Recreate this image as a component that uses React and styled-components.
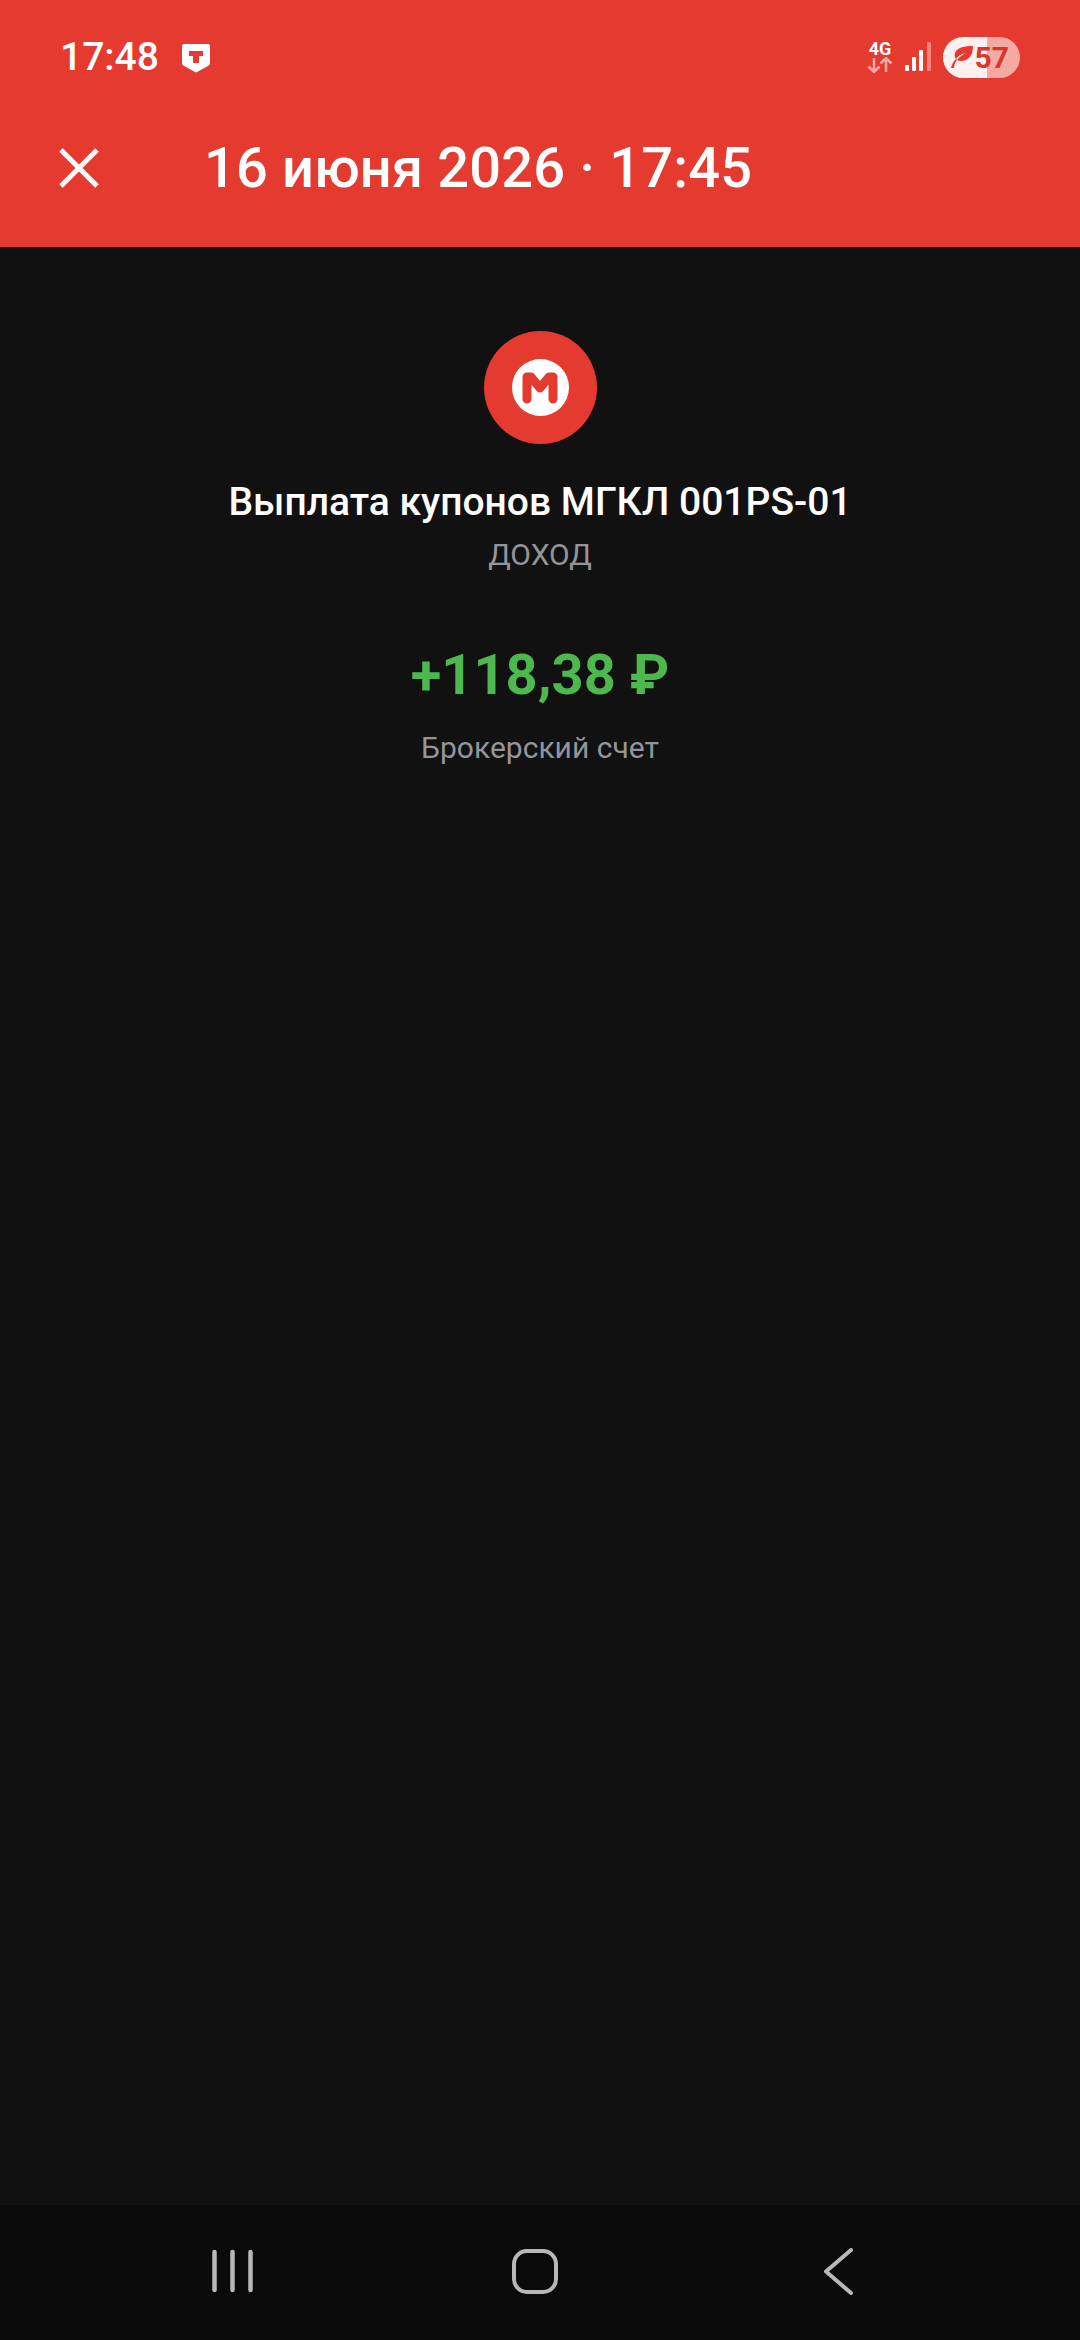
import React from 'react';
import styled, { createGlobalStyle } from 'styled-components';

const GlobalStyle = createGlobalStyle`
    html, body {
        margin: 0;
        padding: 0;
        background: #111111;
    }
`;

const App = () => {
    return (
        <Screen>
            <GlobalStyle />
            <TopArea>
                <StatusBar>
                    <StatusLeft>
                        <Clock>17:48</Clock>
                        <ShieldIcon width="30" height="30" viewBox="0 0 30 30">
                            <path d="M1 3Q1 1 3 1H27Q29 1 29 3V20Q29 22 27 23L15 29.500L3 23Q1 22 1 20Z" fill="#fff" />
                            <path d="M8 8H22V13H18V20H12V13H8Z" fill="#e53a2f" />
                        </ShieldIcon>
                    </StatusLeft>
                    <StatusRight>
                        <Network>
                            <NetworkLabel>4G</NetworkLabel>
                            <svg width="26" height="16" viewBox="0 0 26 16" fill="none" stroke="#f7a9a2" strokeWidth="2.500">
                                <path d="M7 1V15M1.500 9.500L7 15L12.500 9.500" />
                                <path d="M19 15V1M13.500 6.500L19 1L24.500 6.500" />
                            </svg>
                        </Network>
                        <svg width="26" height="30" viewBox="0 0 26 30">
                            <rect x="0" y="23" width="4" height="6" rx="1" fill="#fff" />
                            <rect x="7" y="15" width="4" height="14" rx="1" fill="#fff" />
                            <rect x="14" y="8" width="4" height="21" rx="1" fill="#fff" />
                            <rect x="22" y="0" width="4" height="29" rx="1" fill="#f7847b" />
                        </svg>
                        <Battery>
                            <BatteryFill>
                                <svg width="24" height="24" viewBox="0 0 24 24">
                                    <path d="M23 1C15 1 7 2 5 8C4 11 5 13 6 14C9 10 12 9 16 8C12 10 9 12 7 15C10 17 16 16 19 13C22 10 23 6 23 1Z" fill="#e53a2f" />
                                    <path d="M1 23C2 19 3 17 6 14L7 15C5 18 4 20 4 23Z" fill="#e53a2f" />
                                </svg>
                            </BatteryFill>
                            <BatteryLevel>57</BatteryLevel>
                        </Battery>
                    </StatusRight>
                </StatusBar>
                <Header>
                    <CloseButton>
                        <svg width="40" height="40" viewBox="0 0 40 40" stroke="#fff" strokeWidth="5">
                            <path d="M2 2L38 38M38 2L2 38" />
                        </svg>
                    </CloseButton>
                    <HeaderTitle>16 июня 2026 · 17:45</HeaderTitle>
                </Header>
            </TopArea>

            <Content>
                <LogoCircle>
                    <LogoInner>
                        <svg width="36" height="32" viewBox="0 0 36 32" fill="none" stroke="#e53a2f" strokeWidth="9" strokeLinecap="round" strokeLinejoin="round">
                            <path d="M5 27V5H9L18 16L27 5H31V27" />
                        </svg>
                    </LogoInner>
                </LogoCircle>
                <OperationTitle>Выплата купонов МГКЛ 001PS-01</OperationTitle>
                <Category>ДОХОД</Category>
                <Amount>+118,38 ₽</Amount>
                <Account>Брокерский счет</Account>
            </Content>

            <NavBar>
                <svg width="41" height="44" viewBox="0 0 41 44" stroke="#b8b8b8" strokeWidth="4.500" strokeLinecap="round">
                    <path d="M2.500 3V41M20.500 3V41M38.500 3V41" />
                </svg>
                <HomeButton />
                <svg width="29" height="47" viewBox="0 0 29 47" fill="none" stroke="#b8b8b8" strokeWidth="4" strokeLinecap="round" strokeLinejoin="round">
                    <path d="M27 2L2 23.500L27 45" />
                </svg>
            </NavBar>
        </Screen>
    );
};

const Screen = styled.div`
    display: flex;
    flex-direction: column;
    width: 1080px;
    height: 2340px;
    overflow: hidden;
    background: #111111;
    font-family: Roboto, "Noto Sans", sans-serif;
`;

const TopArea = styled.div`
    height: 247px;
    background: #e53a2f;
    color: #ffffff;
`;

const StatusBar = styled.div`
    display: flex;
    justify-content: space-between;
    align-items: center;
    height: 112px;
    padding: 2px 60px 0;
    box-sizing: border-box;
`;

const StatusLeft = styled.div`
    display: flex;
    align-items: center;
    gap: 22px;
`;

const Clock = styled.span`
    font-size: 39px;
    font-weight: 500;
    line-height: 46px;
`;

const ShieldIcon = styled.svg`
    margin-top: 2px;
`;

const StatusRight = styled.div`
    display: flex;
    align-items: center;
    gap: 12px;
`;

const Network = styled.div`
    display: flex;
    flex-direction: column;
    align-items: center;
    gap: 1px;
`;

const NetworkLabel = styled.span`
    font-size: 18px;
    font-weight: 700;
    line-height: 15px;
`;

const Battery = styled.div`
    position: relative;
    width: 77px;
    height: 41px;
    border-radius: 21px;
    background: #f4a9a3;
    overflow: hidden;
`;

const BatteryFill = styled.div`
    display: flex;
    align-items: center;
    width: 44px;
    height: 100%;
    padding-left: 7px;
    box-sizing: border-box;
    background: #fdf0ef;
`;

const BatteryLevel = styled.span`
    position: absolute;
    right: 11px;
    top: 0;
    font-size: 30px;
    font-weight: 700;
    line-height: 41px;
    color: #d9362c;
`;

const Header = styled.div`
    display: flex;
    align-items: center;
    height: 112px;
    padding-left: 59px;
`;

const CloseButton = styled.div`
    display: flex;
    width: 145px;
`;

const HeaderTitle = styled.h1`
    margin: 0;
    font-size: 56px;
    font-weight: 500;
    line-height: 62px;
    letter-spacing: 0.15px;
`;

const Content = styled.main`
    flex: 1;
    display: flex;
    flex-direction: column;
    align-items: center;
    padding-top: 84px;
`;

const LogoCircle = styled.div`
    display: flex;
    justify-content: center;
    align-items: center;
    width: 113px;
    height: 113px;
    border-radius: 50%;
    background: #e53a2f;
`;

const LogoInner = styled.div`
    display: flex;
    justify-content: center;
    align-items: center;
    width: 57px;
    height: 57px;
    border-radius: 50%;
    background: #ffffff;
`;

const OperationTitle = styled.div`
    margin-top: 35px;
    font-size: 39px;
    font-weight: 500;
    line-height: 46px;
    color: #ffffff;
`;

const Category = styled.div`
    margin-top: 8px;
    font-size: 30px;
    line-height: 44px;
    color: #94959a;
`;

const Amount = styled.div`
    margin-top: 64px;
    font-size: 56px;
    font-weight: 700;
    line-height: 68px;
    color: #4db84e;
`;

const Account = styled.div`
    margin-top: 19px;
    font-size: 30px;
    line-height: 40px;
    color: #94959a;
`;

const NavBar = styled.nav`
    display: flex;
    justify-content: space-between;
    align-items: center;
    height: 135px;
    padding: 0 227px 3px 212px;
    box-sizing: border-box;
    background: #0a0a0a;
`;

const HomeButton = styled.div`
    width: 46px;
    height: 45px;
    margin-right: 8px;
    box-sizing: border-box;
    border: 4px solid #b8b8b8;
    border-radius: 15px;
`;

export default App;
